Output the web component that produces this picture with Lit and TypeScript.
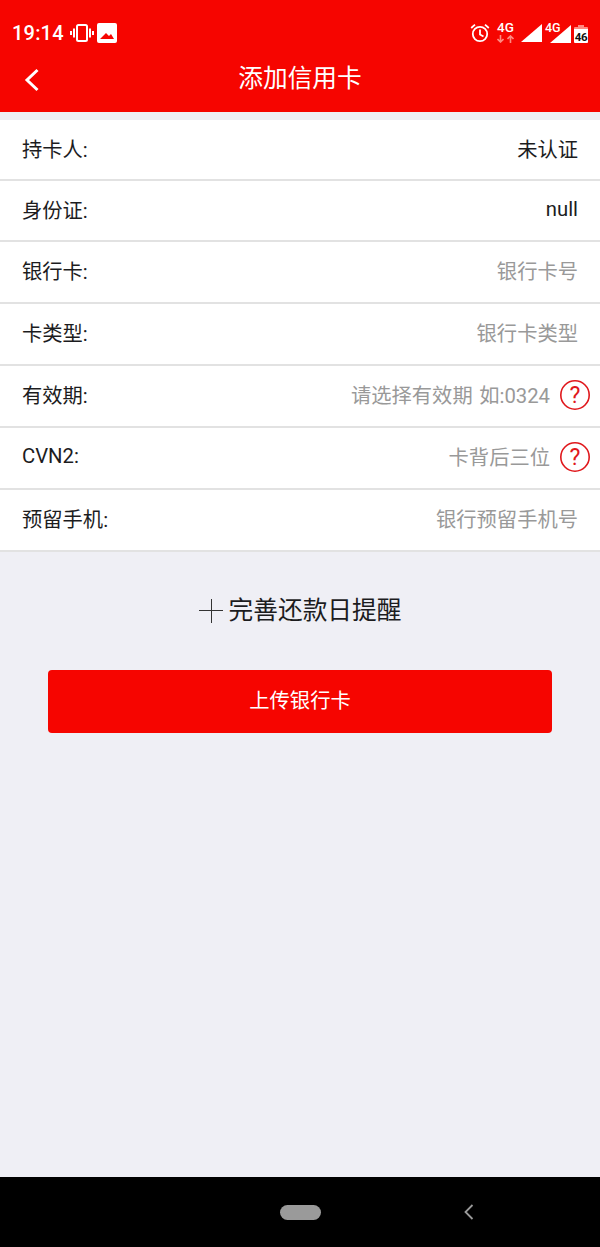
import { LitElement, html, css, svg } from "lit";
import { customElement } from "lit/decorators.js";

const rows = [
  { label: "持卡人:", value: "未认证", dark: true },
  { label: "身份证:", value: "null", dark: true },
  { label: "银行卡:", value: "银行卡号" },
  { label: "卡类型:", value: "银行卡类型" },
  { label: "有效期:", value: "请选择有效期 如:0324", help: true },
  { label: "CVN2:", value: "卡背后三位", help: true },
  { label: "预留手机:", value: "银行预留手机号" },
];

const signal = svg`<svg width="21" height="18" viewBox="0 0 21 18"><path d="M0 18 L21 0 V18 Z" fill="#fff"/></svg>`;

@customElement("app-root")
export class AppRoot extends LitElement {
  static styles = css`
    :host {
      display: flex;
      flex-direction: column;
      height: 1247px;
      background: #efeff5;
      font-family: Roboto, "Noto Sans CJK SC", sans-serif;
      color: #1c1c1e;
    }
    .top {
      background: #f60500;
      height: 112px;
      color: #fff;
      flex: none;
    }
    .status {
      height: 52px;
      display: flex;
      align-items: center;
      padding: 13px 0 0 12px;
      box-sizing: border-box;
    }
    .time {
      font-size: 20px;
      font-weight: 500;
      letter-spacing: 0.2px;
      margin-right: 6px;
    }
    .status-left {
      display: flex;
      align-items: center;
      gap: 3px;
    }
    .status-right {
      margin-left: auto;
      display: flex;
      align-items: center;
      padding-right: 12px;
    }
    .alarm {
      margin-right: 7px;
    }
    .net {
      width: 17px;
      display: flex;
      flex-direction: column;
      align-items: center;
      margin: -1px 7px 0 0;
      font-size: 13.5px;
      font-weight: 500;
      line-height: 12px;
    }
    .arrows {
      display: flex;
      gap: 3px;
      margin-top: 2px;
    }
    .cell {
      position: relative;
      height: 18px;
      margin: 2px 3px 0 8px;
    }
    .net-over {
      position: absolute;
      left: -5px;
      top: -3px;
      font-size: 12.5px;
      font-weight: 500;
      line-height: 12px;
    }
    .battery {
      position: relative;
      width: 14px;
      height: 16px;
      margin-top: 4px;
      background: linear-gradient(#ff8a80 0 2px, #fff 2px);
      border-radius: 1px;
      color: #111;
      font-size: 11.5px;
      font-weight: 700;
      line-height: 21px;
      text-align: center;
      letter-spacing: -0.3px;
    }
    .battery::before {
      content: "";
      position: absolute;
      top: -2px;
      left: 4px;
      width: 6px;
      height: 2px;
      background: #ff8a80;
    }
    .bar {
      position: relative;
      height: 60px;
      box-sizing: border-box;
      padding-bottom: 12px;
      display: flex;
      align-items: center;
      justify-content: center;
      font-size: 24.7px;
    }
    .back {
      position: absolute;
      left: 24px;
      top: 16px;
    }
    .list {
      margin-top: 8px;
      background: #fff;
      flex: none;
    }
    .row {
      height: 62px;
      box-sizing: border-box;
      display: flex;
      align-items: center;
      justify-content: space-between;
      padding: 0 22px 4px;
      border-bottom: 2px solid #e2e2e2;
      font-size: 20.3px;
    }
    .row.help {
      padding-right: 10px;
    }
    .row:nth-child(1),
    .row:nth-child(2) {
      height: 61px;
    }
    .right {
      display: flex;
      align-items: center;
      gap: 10px;
    }
    .placeholder {
      color: #999;
      word-spacing: 1.5px;
    }
    .qmark {
      display: block;
      margin-top: 2px;
    }
    .qmark text {
      font-family: Roboto, sans-serif;
      font-size: 23px;
      fill: #e0181c;
      text-anchor: middle;
    }
    .remind {
      display: flex;
      align-items: center;
      justify-content: center;
      gap: 6px;
      height: 30px;
      margin-top: 44px;
      font-size: 24.7px;
      line-height: 30px;
    }
    .remind span {
      margin-bottom: 1px;
    }
    .submit {
      display: flex;
      align-items: center;
      justify-content: center;
      height: 63px;
      box-sizing: border-box;
      padding-bottom: 5px;
      margin: 44px 48px 0;
      background: #f60500;
      border-radius: 4px;
      color: #fff;
      font-size: 20.3px;
    }
    .spacer {
      flex: 1;
    }
    .nav {
      flex: none;
      height: 70px;
      background: #000;
      position: relative;
      display: flex;
      align-items: center;
      justify-content: center;
    }
    .pill {
      width: 41px;
      height: 15px;
      border-radius: 8px;
      background: #9a9a9a;
    }
    .nav-back {
      position: absolute;
      left: 464px;
      top: 27px;
    }
  `;

  render() {
    return html`
      <div class="top">
        <div class="status">
          <span class="time">19:14</span>
          <div class="status-left">
            <svg width="24" height="20" viewBox="0 0 24 20" fill="none" stroke="#fff">
              <rect x="7" y="2" width="10" height="16" rx="1.5" stroke-width="2" />
              <path d="M4 5.5v9M1 8v4M20 5.5v9M23 8v4" stroke-width="2" />
            </svg>
            <svg width="20" height="20" viewBox="0 0 20 20">
              <rect width="20" height="20" rx="2" fill="#fff" />
              <path d="M3 16l6-6 3 3 2-2 3 5z" fill="#f60500" />
            </svg>
          </div>
          <div class="status-right">
            <svg class="alarm" width="20" height="20" viewBox="0 0 20 20" fill="none" stroke="#fff" stroke-width="1.8">
              <circle cx="10" cy="11" r="7.2" />
              <path d="M10 6.5v5l3.5 2M1.2 5L5 1.6M18.8 5L15 1.6" />
            </svg>
            <div class="net">
              <span>4G</span>
              <div class="arrows">
                <svg width="7" height="8" viewBox="0 0 7 8" fill="none" stroke="#ff8a80" stroke-width="1.6">
                  <path d="M3.5 0v7M.5 4l3 3 3-3" />
                </svg>
                <svg width="7" height="8" viewBox="0 0 7 8" fill="none" stroke="#ff8a80" stroke-width="1.6">
                  <path d="M3.5 8V1M.5 4l3-3 3 3" />
                </svg>
              </div>
            </div>
            ${signal}
            <div class="cell">
              ${signal}
              <span class="net-over">4G</span>
            </div>
            <div class="battery">46</div>
          </div>
        </div>
        <div class="bar">
          <svg class="back" width="16" height="24" viewBox="0 0 16 24" fill="none" stroke="#fff" stroke-width="3">
            <path d="M13.5 2L3 12l10.5 10" />
          </svg>
          添加信用卡
        </div>
      </div>
      <div class="list">
        ${rows.map(
          (r) => html`
            <div class="row ${r.help ? "help" : ""}">
              <span>${r.label}</span>
              <div class="right">
                <span class=${r.dark ? "" : "placeholder"}>${r.value}</span>
                ${r.help
                  ? html`<svg class="qmark" width="30" height="30" viewBox="0 0 30 30">
                      <circle cx="15" cy="15" r="14.2" fill="none" stroke="#e0181c" stroke-width="1.6" />
                      <text x="15" y="23">?</text>
                    </svg>`
                  : ""}
              </div>
            </div>
          `
        )}
      </div>
      <div class="remind">
        <svg width="24" height="24" viewBox="0 0 24 24" stroke="#333" stroke-width="1" shape-rendering="crispEdges">
          <path d="M0 11.5h24M12.5 0v24" />
        </svg>
        <span>完善还款日提醒</span>
      </div>
      <div class="submit">上传银行卡</div>
      <div class="spacer"></div>
      <div class="nav">
        <div class="pill"></div>
        <svg class="nav-back" width="10" height="16" viewBox="0 0 10 16" fill="none" stroke="#9a9a9a" stroke-width="1.8">
          <path d="M8.5 1L1.5 8l7 7" />
        </svg>
      </div>
    `;
  }
}
